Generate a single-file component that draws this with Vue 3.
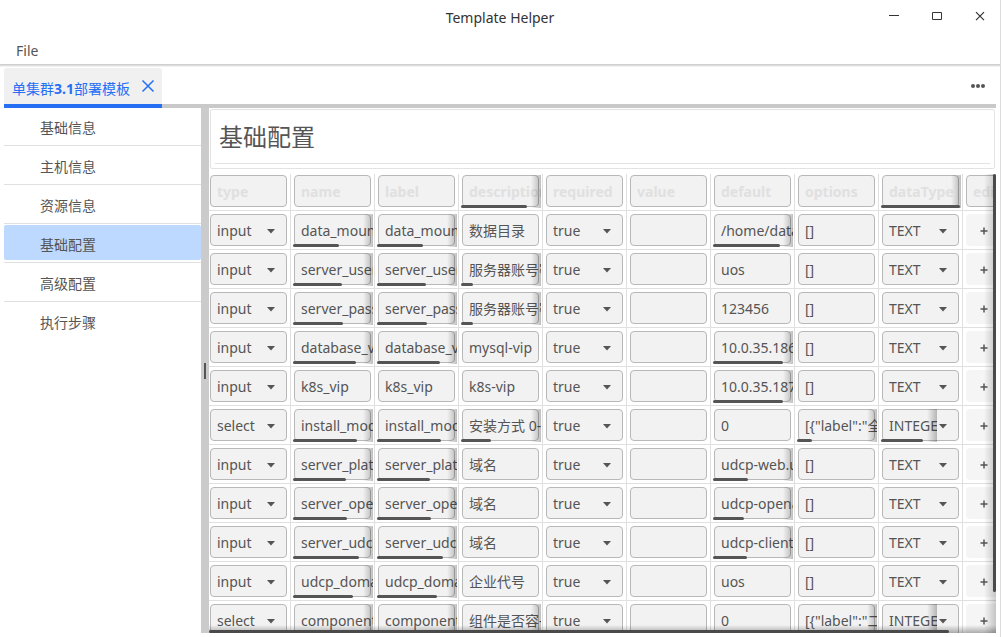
<script setup>
import { ref } from 'vue'

const steps = ['基础信息', '主机信息', '资源信息', '基础配置', '高级配置', '执行步骤']
const activeStep = ref('基础配置')

const columns = [
  { key: 'type' },
  { key: 'name' },
  { key: 'label' },
  { key: 'description', bar: 66 },
  { key: 'required' },
  { key: 'value' },
  { key: 'default' },
  { key: 'options' },
  { key: 'dataType', bar: 79 },
  { key: 'edit' },
]

const selectKeys = {
  type: ['input', 'select'],
  required: ['true', 'false'],
  dataType: ['TEXT', 'INTEGER'],
}

// bars: length of the scroll indicator for each field whose text overflows
function row(type, name, description, def, options, dataType, bars) {
  return {
    values: { type, name, label: name, description, required: 'true', value: '', default: def, options, dataType },
    bars,
  }
}

const rows = ref([
  row('input', 'data_mount_path', '数据目录', '/home/data1', '[]', 'TEXT', { name: 46, label: 46, default: 67 }),
  row('input', 'server_username', '服务器账号密码', 'uos', '[]', 'TEXT', { name: 49, label: 49, description: 12 }),
  row('input', 'server_password', '服务器账号密码', '123456', '[]', 'TEXT', { name: 50, label: 50, description: 12 }),
  row('input', 'database_vip', 'mysql-vip', '10.0.35.186', '[]', 'TEXT', { name: 63, label: 63, default: 70 }),
  row('input', 'k8s_vip', 'k8s-vip', '10.0.35.187', '[]', 'TEXT', { default: 70 }),
  row('select', 'install_mode', '安装方式 0-单机', '0', '[{"label":"全量"}]', 'INTEGER', { name: 64, label: 64, description: 30, options: 15, dataType: 42 }),
  row('input', 'server_platform', '域名', 'udcp-web.uos.com', '[]', 'TEXT', { name: 53, label: 53, default: 35 }),
  row('input', 'server_openapi', '域名', 'udcp-openapi.uos', '[]', 'TEXT', { name: 54, label: 54, default: 31 }),
  row('input', 'server_udcp', '域名', 'udcp-client.uos', '[]', 'TEXT', { name: 66, label: 66, default: 34 }),
  row('input', 'udcp_domain', '企业代号', 'uos', '[]', 'TEXT', { name: 60, label: 60 }),
  row('select', 'component_mode', '组件是否容-器化', '0', '[{"label":"二进制"}]', 'INTEGER', { name: 50, label: 50, description: 30, options: 15, dataType: 42 }),
])
</script>

<template>
  <div class="window">
    <header class="titlebar">
      <span class="app-title">Template Helper</span>
      <div class="window-buttons">
        <button type="button" aria-label="Minimize">
          <svg width="12" height="12" viewBox="0 0 12 12"><path d="M1 5.5H11" /></svg>
        </button>
        <button type="button" aria-label="Maximize">
          <svg width="12" height="12" viewBox="0 0 12 12"><path d="M1.500 2.500H10.500V9.500H1.500Z" /></svg>
        </button>
        <button type="button" aria-label="Close">
          <svg width="12" height="12" viewBox="0 0 12 12"><path class="thin" d="M2 2.200L10 10.200M10 2.200L2 10.200" /></svg>
        </button>
      </div>
    </header>

    <nav class="menubar"><button type="button">File</button></nav>

    <div class="workspace">
      <div class="tabs">
        <div class="tab">
          <a href="#template">单集群<b>3.1</b>部署模板</a>
          <button type="button" aria-label="Close tab">
            <svg width="14" height="14" viewBox="0 0 14 14"><path d="M1.500 1.500L12.500 12.500M12.500 1.500L1.500 12.500" /></svg>
          </button>
        </div>
        <button class="more" type="button" aria-label="More">
          <svg width="16" height="6" viewBox="0 0 16 6">
            <circle cx="3" cy="3" r="2" /><circle cx="8" cy="3" r="2" /><circle cx="13" cy="3" r="2" />
          </svg>
        </button>
      </div>

      <div class="panes">
        <ul class="steps">
          <li v-for="s in steps" :key="s">
            <button type="button" :class="{ active: s === activeStep }" @click="activeStep = s">{{ s }}</button>
          </li>
        </ul>
        <div class="splitter"><i></i></div>

        <main class="content">
          <div class="heading"><h1>{{ activeStep }}</h1></div>

          <div class="grid">
            <table>
              <thead>
                <tr>
                  <th v-for="c in columns" :key="c.key">
                    <div class="field head" :class="{ over: c.bar }">
                      <input type="text" :value="c.key" :aria-label="c.key + ' column'" disabled />
                      <span v-if="c.bar" class="bar" :style="{ width: c.bar + 'px' }"></span>
                    </div>
                  </th>
                </tr>
              </thead>
              <tbody>
                <tr v-for="(r, i) in rows" :key="i">
                  <td v-for="c in columns" :key="c.key">
                    <button v-if="c.key === 'edit'" class="add" type="button" aria-label="Add row">
                      <svg width="8" height="8" viewBox="0 0 8 8"><path d="M4 0.500V7.500M0.500 4H7.500" /></svg>
                    </button>
                    <div v-else-if="selectKeys[c.key]" class="field pick" :class="{ over: r.bars[c.key] }">
                      <select v-model="r.values[c.key]" :aria-label="c.key">
                        <option v-for="o in selectKeys[c.key]" :key="o">{{ o }}</option>
                      </select>
                      <svg class="caret" width="8" height="5" viewBox="0 0 8 5"><path d="M0 0H8L4 4.500Z" /></svg>
                      <span v-if="r.bars[c.key]" class="bar" :style="{ width: r.bars[c.key] + 'px' }"></span>
                    </div>
                    <div v-else class="field" :class="{ over: r.bars[c.key] }">
                      <input v-model="r.values[c.key]" type="text" :aria-label="c.key" />
                      <span v-if="r.bars[c.key]" class="bar" :style="{ width: r.bars[c.key] + 'px' }"></span>
                    </div>
                  </td>
                </tr>
              </tbody>
            </table>
            <div class="scroll-y"><i></i></div>
            <div class="scroll-x"><i></i></div>
          </div>
        </main>
      </div>
    </div>
  </div>
</template>

<style>
body {
  margin: 0;
  background: #fff;
}
</style>

<style scoped>
* {
  box-sizing: border-box;
}
.window {
  display: flex;
  flex-direction: column;
  height: 100vh;
  overflow: hidden;
  border-right: 1px solid #dcdcdc;
  background: #fff;
  color: #555;
  font: 14px/20px "Noto Sans", "Noto Sans CJK SC", sans-serif;
}
button,
input,
select {
  margin: 0;
  padding: 0;
  border: 0;
  background: none;
  color: inherit;
  font: inherit;
}
svg {
  display: block;
  fill: none;
  stroke: currentColor;
}
.titlebar {
  display: grid;
  grid-template-columns: 1fr auto 1fr;
  align-items: center;
  height: 36px;
  color: #333;
  flex: none;
}
.app-title {
  grid-column: 2;
}
.window-buttons {
  display: flex;
  justify-self: end;
  padding: 0 14px 4px 0;
  gap: 31px;
}
.thin {
  stroke-width: 1.2;
}
.menubar {
  height: 28px;
  padding: 5px 16px 0;
  flex: none;
  box-shadow: 0 1px #cfcfcf, 0 2px #dedede, 0 3px #f2f2f2;
}
.workspace {
  display: flex;
  flex-direction: column;
  flex: 1;
  min-height: 0;
  padding: 4px;
}
.tabs {
  display: flex;
  align-items: stretch;
  justify-content: space-between;
  height: 40px;
  flex: none;
  box-shadow: inset 0 -4px #c9c9c9;
}
.tab {
  display: flex;
  gap: 11px;
  padding: 10px 7px 0 8px;
  border-bottom: 4px solid #256ff5;
  border-radius: 3px 3px 0 0;
  background: #f0f0f0;
  color: #256ff5;
}
.tab a {
  padding-top: 1px;
  color: inherit;
  text-decoration: none;
}
.tab button {
  height: 16px;
}
.tab svg {
  stroke-width: 1.5;
}
.more {
  padding: 0 10px 4px;
}
.more svg {
  fill: #555;
  stroke: none;
}
.panes {
  display: flex;
  flex: 1;
  min-height: 0;
}
.steps {
  width: 197px;
  margin: 0;
  padding: 0;
  list-style: none;
  flex: none;
}
.steps li {
  padding: 1px 0 2px;
  border-bottom: 1px solid #e0e0e0;
}
.steps li:first-child {
  padding-top: 0;
}
.steps li:last-child {
  border: 0;
}
.steps button {
  display: block;
  width: 100%;
  height: 35px;
  padding: 5px 0 0 36px;
  border-radius: 2px;
  text-align: left;
}
.steps .active {
  background: #bdd9ff;
}
.splitter {
  display: flex;
  align-items: center;
  justify-content: center;
  width: 8px;
  flex: none;
  background: #cbcbcb;
}
.splitter i {
  width: 2px;
  height: 16px;
  background: #555;
}
.content {
  display: flex;
  flex-direction: column;
  flex: 1;
  min-width: 0;
}
.heading {
  margin: 1px 1px 5px;
  padding: 0 4px 4px;
  border: 1px solid #e3e3e3;
  border-radius: 2px;
}
.heading h1 {
  margin: 0;
  padding: 9px 4px 8px;
  border-bottom: 1px solid #e3e3e3;
  font-size: 24px;
  line-height: 36px;
  font-weight: 400;
}
.grid {
  position: relative;
  flex: 1;
  min-height: 0;
  overflow: hidden;
}
table {
  border-collapse: separate;
  border-spacing: 0;
}
th,
td {
  padding: 3px;
  border-right: 1px solid #e0e0e0;
  border-bottom: 1px solid #e0e0e0;
  font-weight: 400;
}
th {
  padding-top: 1px;
}
th:first-child,
td:first-child {
  padding-left: 1px;
}
.field {
  position: relative;
  width: 77px;
  height: 32px;
  border: 1px solid #b8b8b8;
  border-radius: 4px;
  background: #f2f2f2;
}
.field input {
  display: block;
  width: 78px;
  height: 30px;
  padding-left: 6px;
}
.head input {
  color: #e0e0e0;
  font-weight: 700;
}
.field select {
  display: block;
  width: 54px;
  height: 30px;
  padding: 2px 0 0 6px;
  appearance: none;
}
.over::after {
  content: "";
  position: absolute;
  top: -1px;
  right: -3px;
  width: 10px;
  height: 33px;
  background: linear-gradient(to right, rgba(0, 0, 0, 0), rgba(0, 0, 0, 0.25));
  pointer-events: none;
}
.pick.over::after {
  right: 21px;
}
.bar {
  position: absolute;
  left: -2px;
  bottom: -2px;
  z-index: 1;
  height: 3px;
  border-radius: 2px;
  background: #555;
}
.caret {
  position: absolute;
  top: 14px;
  right: 11px;
  fill: #555;
  stroke: none;
  pointer-events: none;
}
.add {
  display: grid;
  place-items: center;
  width: 36px;
  height: 32px;
  padding-top: 2px;
  border-radius: 4px;
  background: #f5f5f5;
}
.add svg {
  stroke-width: 1.5;
}
.scroll-y,
.scroll-x {
  position: absolute;
  right: 0;
  bottom: 0;
  z-index: 2;
}
.scroll-y {
  top: 0;
  width: 12px;
  background: linear-gradient(to right, rgba(0, 0, 0, 0), rgba(0, 0, 0, 0.2));
}
.scroll-x {
  left: 0;
  height: 8px;
  background: linear-gradient(to bottom, rgba(0, 0, 0, 0), rgba(0, 0, 0, 0.3));
}
.scroll-y i {
  display: block;
  width: 3px;
  height: 91%;
  margin-left: auto;
  border-radius: 2px;
  background: #4a4a4a;
}
.scroll-x i {
  display: block;
  width: 94%;
  height: 3px;
  margin-top: 5px;
  border-radius: 2px;
  background: #4a4a4a;
}
</style>
